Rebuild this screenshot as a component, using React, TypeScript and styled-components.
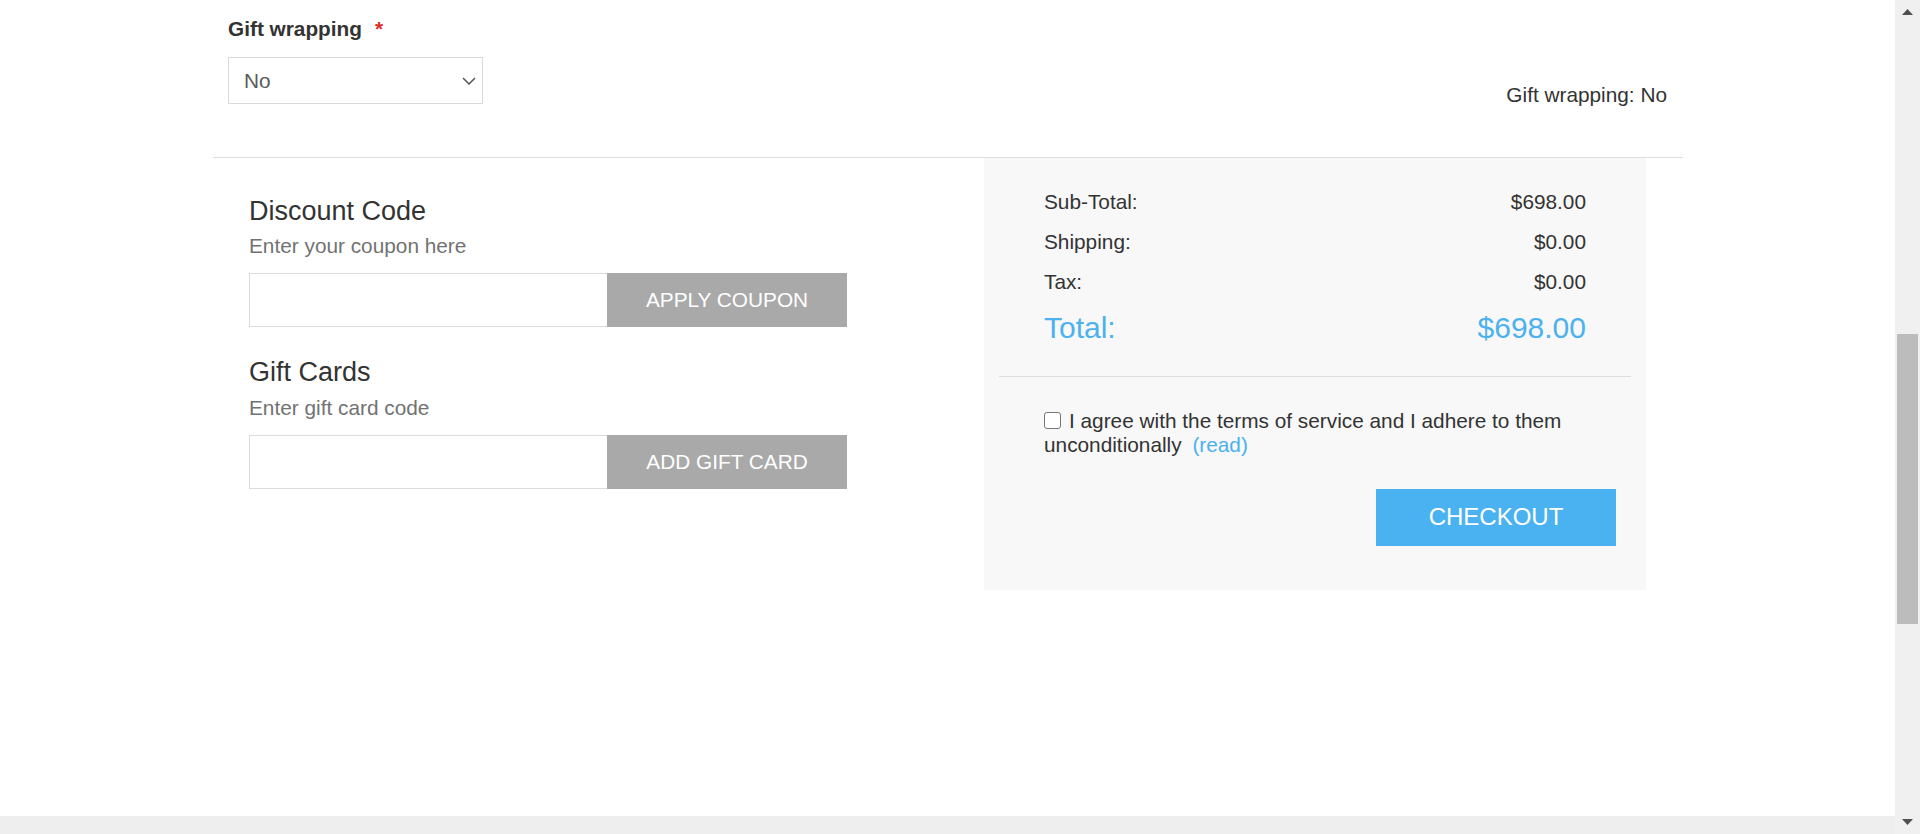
import React from "react";
import styled, { createGlobalStyle } from "styled-components";

const GlobalStyle = createGlobalStyle`
  html, body { margin: 0; padding: 0; overflow: hidden; background: #fff; }
  body { font-family: "Liberation Sans", Arial, Helvetica, sans-serif; color: #333; }
  * { box-sizing: border-box; }
`;

const Frame = styled.div`
  width: 1920px;
  height: 834px;
  display: grid;
  grid-template-columns: 1fr 25px;
  grid-template-rows: 1fr 18px;
  overflow: hidden;
  background: #fff;
`;

const Viewport = styled.main`
  grid-column: 1;
  grid-row: 1;
  overflow: hidden;
`;

const VScroll = styled.div`
  grid-column: 2;
  grid-row: 1 / span 2;
  background: #f0f0f0;
  display: flex;
  flex-direction: column;
  align-items: center;
`;

const ScrollArrow = styled.svg<{ $down?: boolean }>`
  display: block;
  flex: none;
  margin: ${(p) => (p.$down ? "0 0 9px" : "9px 0 0")};
`;

const Thumb = styled.div`
  width: 21px;
  height: 290px;
  margin-top: 319px;
  background: #bcbcbc;
  flex: none;
`;

const Spacer = styled.div`
  flex: 1;
`;

const HScroll = styled.div`
  grid-column: 1;
  grid-row: 2;
  background: #eeeeee;
`;

const Container = styled.div`
  width: 1470px;
  margin-left: 213px;
`;

const AttributeSection = styled.section`
  display: flex;
  justify-content: space-between;
  align-items: flex-start;
  padding: 17px 16px 53px 15px;
  border-bottom: 1px solid #dddddd;
`;

const AttributeField = styled.div`
  display: flex;
  flex-direction: column;
`;

const FieldLabel = styled.label`
  font-size: 20.8px;
  line-height: 24px;
  font-weight: bold;
  color: #333;
`;

const Required = styled.span`
  color: #e02b27;
  margin-left: 13px;
`;

const SelectBox = styled.div`
  margin-top: 16px;
  width: 255px;
  height: 47px;
  border: 1px solid #d9d9d9;
  background: #fff;
  display: flex;
  align-items: center;
  justify-content: space-between;
  padding: 0 6px 0 15px;
  font-size: 20.8px;
  color: #5a5a5a;
`;

const AttributeSummary = styled.div`
  margin-top: 68.5px;
  font-size: 20.8px;
  line-height: 18px;
  color: #333;
`;

const CartArea = styled.div`
  display: grid;
  grid-template-columns: 771px 662px;
  align-items: start;
`;

const CouponColumn = styled.div`
  padding: 36.5px 0 0 36px;
`;

const CodeBlock = styled.div<{ $first?: boolean }>`
  margin-top: ${(p) => (p.$first ? "0" : "29px")};
`;

const BlockTitle = styled.h3`
  margin: 0;
  font-size: 27px;
  line-height: 32px;
  font-weight: normal;
  color: #333;
`;

const BlockHint = styled.p`
  margin: 7.5px 0 0;
  font-size: 20.8px;
  line-height: 24px;
  color: #727272;
`;

const CodeRow = styled.div`
  display: flex;
  margin-top: 15px;
  height: 54px;
`;

const CodeInput = styled.input`
  width: 358px;
  height: 54px;
  border: 1px solid #dcdcdc;
  border-right: none;
  background: #fff;
  outline: none;
  padding: 0 12px;
  font-family: inherit;
  font-size: 20.8px;
`;

const GrayButton = styled.button`
  width: 240px;
  height: 54px;
  border: none;
  background: #a9a9a9;
  color: #fff;
  font-family: inherit;
  font-size: 20.8px;
  text-transform: uppercase;
  padding: 0;
  cursor: pointer;
`;

const TotalsPanel = styled.aside`
  background: #f8f8f8;
  padding: 24px 0 44.5px;
`;

const TotalsTable = styled.div`
  padding: 0 60px;
`;

const TotalsRow = styled.div<{ $grand?: boolean }>`
  display: flex;
  justify-content: space-between;
  padding: 8px 0;
  font-size: ${(p) => (p.$grand ? "30px" : "20.8px")};
  line-height: ${(p) => (p.$grand ? "36px" : "24px")};
  color: ${(p) => (p.$grand ? "#4bb1ef" : "#333")};
`;

const PanelDivider = styled.hr`
  margin: 21.6px 15px 0;
  border: none;
  border-top: 1px solid #dddddd;
  height: 0;
`;

const AgreeLabel = styled.label`
  display: block;
  margin: 32px 60px 0;
  font-size: 20.8px;
  line-height: 24.5px;
  color: #333;
`;

const AgreeBox = styled.input`
  appearance: none;
  -webkit-appearance: none;
  display: inline-block;
  width: 17px;
  height: 17px;
  margin: 0 8px 0 0;
  border: 1px solid #767676;
  border-radius: 3px;
  background: #fff;
  vertical-align: -1px;
`;

const ReadLink = styled.a`
  color: #4bb1ef;
  text-decoration: none;
  margin-left: 5px;
`;

const CheckoutRow = styled.div`
  display: flex;
  justify-content: flex-end;
  padding-right: 30px;
  margin-top: 31px;
`;

const CheckoutButton = styled.button`
  width: 240px;
  height: 57.4px;
  border: none;
  background: #4bb2f1;
  color: #fff;
  font-family: inherit;
  font-size: 24px;
  padding: 0;
  cursor: pointer;
`;

const totals = [
  { label: "Sub-Total:", value: "$698.00" },
  { label: "Shipping:", value: "$0.00" },
  { label: "Tax:", value: "$0.00" },
];

export default function App() {
  return (
    <>
      <GlobalStyle />
      <Frame>
        <Viewport>
          <Container>
            <AttributeSection>
              <AttributeField>
                <FieldLabel>
                  Gift wrapping<Required>*</Required>
                </FieldLabel>
                <SelectBox>
                  <span>No</span>
                  <svg width="14" height="8" viewBox="0 0 14 8">
                    <path d="M1 1 L7 7 L13 1" fill="none" stroke="#555" strokeWidth="1.5" />
                  </svg>
                </SelectBox>
              </AttributeField>
              <AttributeSummary>Gift wrapping: No</AttributeSummary>
            </AttributeSection>

            <CartArea>
              <CouponColumn>
                <CodeBlock $first>
                  <BlockTitle>Discount Code</BlockTitle>
                  <BlockHint>Enter your coupon here</BlockHint>
                  <CodeRow>
                    <CodeInput type="text" />
                    <GrayButton>Apply coupon</GrayButton>
                  </CodeRow>
                </CodeBlock>
                <CodeBlock>
                  <BlockTitle>Gift Cards</BlockTitle>
                  <BlockHint>Enter gift card code</BlockHint>
                  <CodeRow>
                    <CodeInput type="text" />
                    <GrayButton>Add gift card</GrayButton>
                  </CodeRow>
                </CodeBlock>
              </CouponColumn>

              <TotalsPanel>
                <TotalsTable>
                  {totals.map((t) => (
                    <TotalsRow key={t.label}>
                      <span>{t.label}</span>
                      <span>{t.value}</span>
                    </TotalsRow>
                  ))}
                  <TotalsRow $grand>
                    <span>Total:</span>
                    <span>$698.00</span>
                  </TotalsRow>
                </TotalsTable>
                <PanelDivider />
                <AgreeLabel>
                  <AgreeBox type="checkbox" />I agree with the terms of service and I adhere to them
                  unconditionally <ReadLink href="#">(read)</ReadLink>
                </AgreeLabel>
                <CheckoutRow>
                  <CheckoutButton>CHECKOUT</CheckoutButton>
                </CheckoutRow>
              </TotalsPanel>
            </CartArea>
          </Container>
        </Viewport>
        <VScroll>
          <ScrollArrow width="11" height="6" viewBox="0 0 11 6">
            <path d="M0 6 L5.5 0 L11 6 Z" fill="#505050" />
          </ScrollArrow>
          <Thumb />
          <Spacer />
          <ScrollArrow $down width="11" height="6" viewBox="0 0 11 6">
            <path d="M0 0 L5.5 6 L11 0 Z" fill="#505050" />
          </ScrollArrow>
        </VScroll>
        <HScroll />
      </Frame>
    </>
  );
}
